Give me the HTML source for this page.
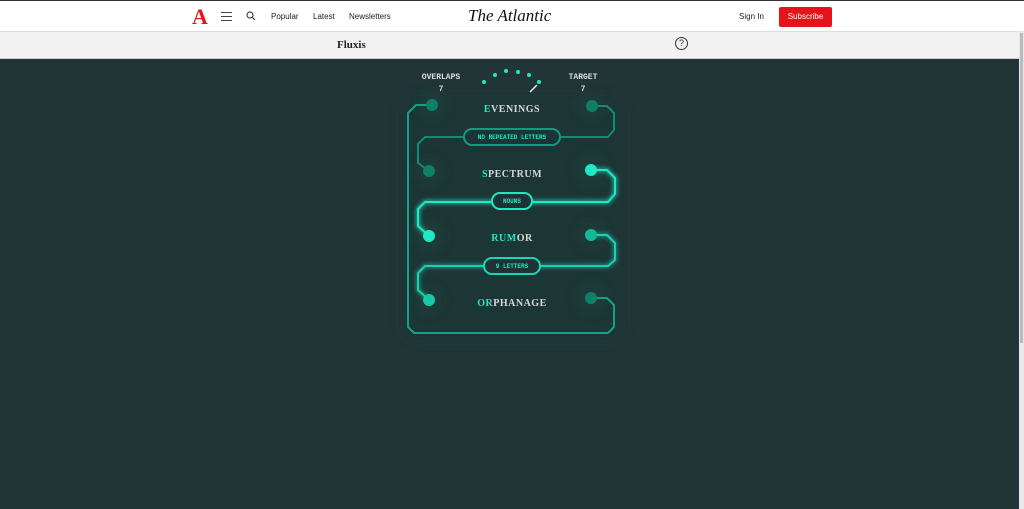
<!DOCTYPE html><html><head><style>
body{margin:0;width:1024px;height:509px;overflow:hidden;background:#213537;font-family:"Liberation Sans",sans-serif}
.top{position:absolute;left:0;top:0;width:1024px;height:31px;background:#fff;border-top:1px solid #333;box-sizing:border-box}
.sub{position:absolute;left:0;top:31px;width:1024px;height:28px;background:#f2f2f2;border-top:1px solid #ddd;border-bottom:1px solid #ccc;box-sizing:border-box}
.t{position:absolute;font-size:8px;color:#222}
</style></head><body>
<div class="top">
<div style="position:absolute;left:192px;top:3px;font:bold 22px 'Liberation Serif',serif;color:#e7131a">A</div>
<div style="position:absolute;left:221px;top:11px;width:11px;border-top:1px solid #444;height:3px;border-bottom:1px solid #444"></div>
<div style="position:absolute;left:221px;top:19px;width:11px;border-top:1px solid #444"></div>
<svg style="position:absolute;left:246px;top:10px" width="10" height="10"><circle cx="4" cy="4" r="3" fill="none" stroke="#444" stroke-width="1.2"/><line x1="6.3" y1="6.3" x2="9" y2="9" stroke="#444" stroke-width="1.2"/></svg>
<div class="t" style="left:271px;top:11px">Popular</div>
<div class="t" style="left:313px;top:11px">Latest</div>
<div class="t" style="left:349px;top:11px">Newsletters</div>
<div style="position:absolute;left:468px;top:5px;font:italic 17px 'Liberation Serif',serif;color:#111">The Atlantic</div>
<div class="t" style="left:739px;top:11px">Sign In</div>
<div style="position:absolute;left:779px;top:6px;width:53px;height:20px;background:#e7131a;border-radius:2px;color:#fff;font-size:8px;text-align:center;line-height:20px">Subscribe</div>
</div>
<div class="sub">
<div style="position:absolute;left:337px;top:7px;font:bold 11px 'Liberation Serif',serif;color:#222">Fluxis</div>
<div style="position:absolute;left:675px;top:5px;width:11px;height:11px;border:1px solid #333;border-radius:50%;font-size:9px;text-align:center;line-height:11px;color:#333">?</div>
</div>
<div style="position:absolute;right:0;top:31px;width:5px;height:478px;background:#e8e8e8"></div>
<div style="position:absolute;right:1px;top:33px;width:3px;height:310px;background:#bbb"></div>
<svg style="position:absolute;left:0;top:0" width="1024" height="509">
<defs><filter id="g" x="-20%" y="-20%" width="140%" height="140%"><feGaussianBlur stdDeviation="2"/></filter>
<filter id="b" x="-20%" y="-20%" width="140%" height="140%"><feGaussianBlur stdDeviation="5"/></filter></defs>
<rect x="400" y="94" width="226" height="248" rx="16" fill="#1e3634" filter="url(#b)"/>
<g fill="#1d3a38" filter="url(#b)"><circle cx="432" cy="105" r="14"/><circle cx="592" cy="106" r="14"/><circle cx="429" cy="171" r="14"/><circle cx="591" cy="170" r="16"/><circle cx="429" cy="236" r="16"/><circle cx="591" cy="235" r="14"/><circle cx="429" cy="300" r="14"/><circle cx="591" cy="298" r="16"/></g>
<g font-family="Liberation Mono,monospace" font-weight="bold" font-size="8" fill="#ddd" text-anchor="middle">
<text x="441" y="79">OVERLAPS</text><text x="441" y="91">7</text>
<text x="583" y="79">TARGET</text><text x="583" y="91">7</text></g>
<g fill="#1de9c4"><circle cx="484" cy="82" r="2"/><circle cx="495" cy="75" r="2"/><circle cx="506" cy="71" r="2"/><circle cx="518" cy="72" r="2"/><circle cx="529" cy="75" r="2"/><circle cx="539" cy="82" r="2"/></g>
<line x1="530" y1="92" x2="537" y2="85" stroke="#eee" stroke-width="1.5"/>
<g fill="none" stroke-linejoin="round">
<path d="M432,105 H416 L408,113 V327 L414,333 H608 L614,327 V305 L607,298 H591" stroke="#11a386" stroke-width="2"/>
<path d="M592,106 H607 L614,113 V130 L608,137 H425 L418,144 V163 L429,171" stroke="#0f8c74" stroke-width="2"/>
<path d="M591,170 H607 L615,178 V194 L608,202 H425 L418,209 V226 L429,236" stroke="#1de9c4" stroke-width="4" filter="url(#g)" opacity=".7"/>
<path d="M591,170 H607 L615,178 V194 L608,202 H425 L418,209 V226 L429,236" stroke="#1de9c4" stroke-width="2"/>
<path d="M591,235 H607 L615,243 V260 L608,266 H425 L418,273 V290 L429,300" stroke="#1de9c4" stroke-width="4" filter="url(#g)" opacity=".5"/>
<path d="M591,235 H607 L615,243 V260 L608,266 H425 L418,273 V290 L429,300" stroke="#19d0af" stroke-width="2"/>
</g>
<g stroke-width="2">
<rect x="464" y="129" width="96" height="16" rx="8" fill="#1d3335" stroke="#0f9c80"/>
<rect x="492" y="193" width="40" height="16" rx="8" fill="#1d3335" stroke="#1de9c4"/>
<rect x="484" y="258" width="56" height="16" rx="8" fill="#1d3335" stroke="#1ad8b6"/>
</g>
<g font-family="Liberation Mono,monospace" font-weight="bold" font-size="6" fill="#1de9c4" text-anchor="middle">
<text x="512" y="139">NO REPEATED LETTERS</text><text x="512" y="203">NOUNS</text><text x="512" y="268">9 LETTERS</text></g>
<circle cx="432" cy="105" r="6" fill="#0e8068"/><circle cx="592" cy="106" r="6" fill="#0e8068"/>
<circle cx="429" cy="171" r="6" fill="#0e8068"/><circle cx="591" cy="170" r="6" fill="#1de9c4"/>
<circle cx="429" cy="236" r="6" fill="#1de9c4"/><circle cx="591" cy="235" r="6" fill="#16b898"/>
<circle cx="429" cy="300" r="6" fill="#18c9a7"/><circle cx="591" cy="298" r="6" fill="#0e8068"/>
<g font-family="Liberation Serif,serif" font-weight="bold" font-size="10" fill="#d8d8d8" text-anchor="middle" letter-spacing="0.5">
<text x="512" y="112"><tspan fill="#1de9c4">E</tspan>VENINGS</text>
<text x="512" y="177"><tspan fill="#1de9c4">S</tspan>PECTRUM</text>
<text x="512" y="241"><tspan fill="#1de9c4">RUM</tspan>OR</text>
<text x="512" y="306"><tspan fill="#1de9c4">OR</tspan>PHANAGE</text></g>
</svg>
</body></html>
